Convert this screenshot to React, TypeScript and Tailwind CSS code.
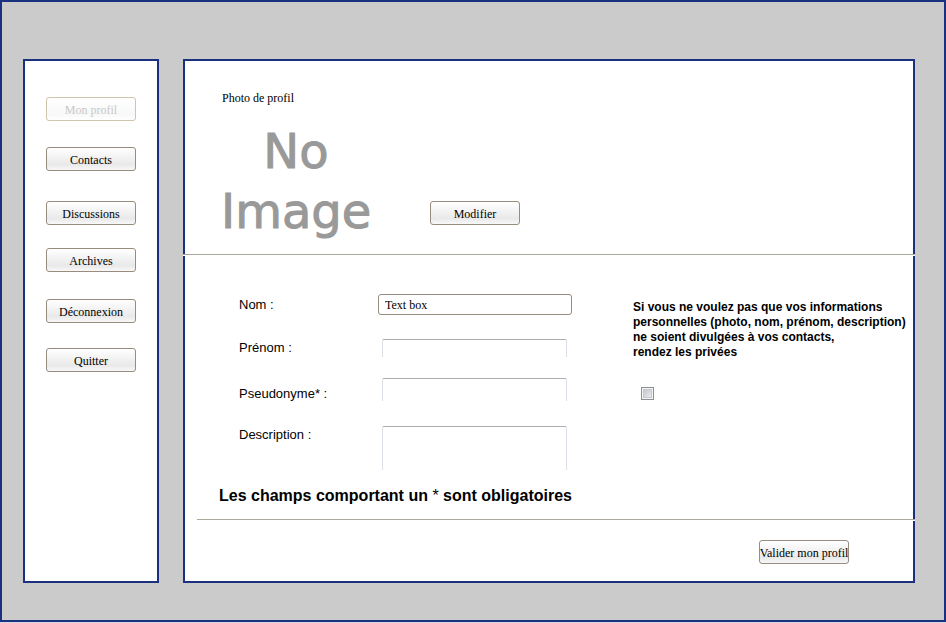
import type { ReactNode } from "react";

const serif = "font-['Liberation_Serif','Times_New_Roman',serif]";
const sans = "font-['Liberation_Sans',Arial,sans-serif]";

type ButtonProps = {
  children: ReactNode;
  className?: string;
  disabled?: boolean;
  type?: "button" | "submit";
};

function PushButton({ children, className = "", disabled = false, type = "button" }: ButtonProps) {
  return (
    <button
      type={type}
      disabled={disabled}
      className={`${serif} flex h-6 w-[90px] shrink-0 items-center justify-center rounded-[3px] border border-[#988c7e] bg-linear-to-b from-white via-[#e9e9e9] via-75% to-[#f8f8f8] pt-px text-[12px] leading-4 whitespace-nowrap text-black disabled:border-[#d0c4ae] disabled:from-white disabled:via-[#f8f8f8] disabled:to-white disabled:text-[#c8c8c8] ${className}`}
    >
      {children}
    </button>
  );
}

const menu = [
  { label: "Mon profil", space: "", disabled: true },
  { label: "Contacts", space: "mt-[26px]" },
  { label: "Discussions", space: "mt-[30px]" },
  { label: "Archives", space: "mt-[23px]" },
  { label: "Déconnexion", space: "mt-[27px]" },
  { label: "Quitter", space: "mt-[25px]" },
];

const labelText = `${sans} w-[139px] shrink-0 text-[13px] leading-[22px]`;
const plainField =
  "ml-1 block w-[185px] resize-none rounded-t-[2px] border border-b-0 border-t-[#abadb3] border-x-[#dbdfe6] bg-white px-1 text-[12px] outline-none";

function Divider({ className = "" }: { className?: string }) {
  return <hr className={`-mr-0.5 h-0.5 border-0 border-t border-[#aca899] bg-white ${className}`} />;
}

export default function App() {
  return (
    <div className="bg-[#d5d9e6] pb-px text-black">
      <div className="flex gap-6 border-2 border-[#1a317f] bg-[#cbcbcb] pt-[57px] pr-[29px] pb-[37px] pl-[21px]">
        <nav className="flex w-[136px] shrink-0 flex-col items-center border-2 border-[#1a317f] bg-white pt-9">
          {menu.map((item) => (
            <PushButton key={item.label} className={item.space} disabled={item.disabled}>
              {item.label}
            </PushButton>
          ))}
        </nav>

        <main className="min-w-0 flex-1 border-2 border-[#1a317f] bg-white">
          <section className="flex h-[193px] items-start pl-9">
            <div className="w-[150px] pt-[29px]">
              <h2 className={`${serif} pl-px text-[12px] leading-4`}>Photo de profil</h2>
              <div
                role="img"
                aria-label="No Image"
                className="mt-[15px] text-center font-['DejaVu_Sans',sans-serif] text-[48px] leading-[60px] text-[#999999] [-webkit-text-stroke:1px_#999999]"
              >
                <div>No</div>
                <div>Image</div>
              </div>
            </div>
            <PushButton className="mt-[140px] ml-[59px]">Modifier</PushButton>
          </section>

          <Divider className="-ml-0.5" />

          <form onSubmit={(e) => e.preventDefault()}>
            <div className="flex justify-between pt-[38px] pl-[54px]">
              <div>
                <div className="flex h-[21px]">
                  <label htmlFor="nom" className={labelText}>Nom :</label>
                  <input
                    id="nom"
                    type="text"
                    defaultValue="Text box"
                    className={`${serif} h-[21px] w-[194px] rounded-[3px] border border-[#988c7e] bg-white px-1.5 pt-px text-[12px] outline-none`}
                  />
                </div>
                <div className="mt-[22px] flex h-[21px]">
                  <label htmlFor="prenom" className={labelText}>Prénom :</label>
                  <input id="prenom" type="text" className={`${serif} ${plainField} mt-0.5 h-[18px]`} />
                </div>
                <div className="mt-5 flex h-[27px]">
                  <label htmlFor="pseudonyme" className={`${labelText} self-end`}>Pseudonyme* :</label>
                  <input id="pseudonyme" type="text" className={`${serif} ${plainField} h-[23px]`} />
                </div>
                <div className="mt-[19px] flex">
                  <label htmlFor="description" className={labelText}>Description :</label>
                  <textarea id="description" className={`${serif} ${plainField} mt-0.5 h-11`} />
                </div>
              </div>

              <div className="w-[280px] shrink-0 pt-1.5">
                <label htmlFor="prive" className={`${sans} block text-[12px] leading-[15px] font-bold`}>
                  Si vous ne voulez pas que vos informations
                  <br />
                  personnelles (photo, nom, prénom, description)
                  <br />
                  ne soient divulgées à vos contacts,
                  <br />
                  rendez les privées
                </label>
                <input
                  id="prive"
                  type="checkbox"
                  className="mt-[27px] ml-2 block size-[13px] appearance-none border border-[#8e8f8f] bg-linear-to-br from-[#b8bec6] to-[#f4f4f4] shadow-[inset_0_0_0_1px_#f4f4f4,inset_0_0_0_2px_#c6cacf] checked:bg-[#4b6a9b]"
                />
              </div>
            </div>

            <p className={`${sans} mt-[14px] mb-[11px] pl-[34px] text-[16px] leading-6 font-bold`}>
              Les champs comportant un <span className="font-normal">*</span> sont obligatoires
            </p>

            <Divider className="ml-3" />

            <div className="flex justify-end pt-[19px] pr-16 pb-[17px]">
              <PushButton type="submit">Valider mon profil</PushButton>
            </div>
          </form>
        </main>
      </div>
    </div>
  );
}
